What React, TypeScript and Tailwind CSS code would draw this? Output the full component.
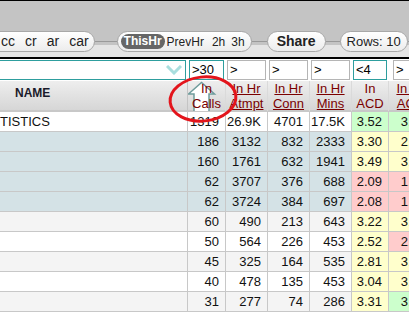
import React from 'react'

type Tone = 'g' | 'y' | 'r'

type Row = {
  name: string
  calls: string
  atmpt: string
  conn: string
  mins: string
  acd: string
  acdTone: Tone
  last: string
  lastTone: Tone
  bg: 'white' | 'blue' | 'gray'
}

const ROWS: Row[] = [
  { name: 'TISTICS', calls: '1319', atmpt: '26.9K', conn: '4701', mins: '17.5K', acd: '3.52', acdTone: 'g', last: '3.74', lastTone: 'g', bg: 'white' },
  { name: '', calls: '186', atmpt: '3132', conn: '832', mins: '2333', acd: '3.30', acdTone: 'y', last: '2.80', lastTone: 'y', bg: 'blue' },
  { name: '', calls: '160', atmpt: '1761', conn: '632', mins: '1941', acd: '3.49', acdTone: 'y', last: '3.07', lastTone: 'y', bg: 'blue' },
  { name: '', calls: '62', atmpt: '3707', conn: '376', mins: '688', acd: '2.09', acdTone: 'r', last: '1.83', lastTone: 'r', bg: 'blue' },
  { name: '', calls: '62', atmpt: '3724', conn: '384', mins: '697', acd: '2.08', acdTone: 'r', last: '1.81', lastTone: 'r', bg: 'blue' },
  { name: '', calls: '60', atmpt: '490', conn: '213', mins: '643', acd: '3.22', acdTone: 'y', last: '3.02', lastTone: 'y', bg: 'gray' },
  { name: '', calls: '50', atmpt: '564', conn: '226', mins: '453', acd: '2.52', acdTone: 'y', last: '2.00', lastTone: 'r', bg: 'white' },
  { name: '', calls: '45', atmpt: '325', conn: '164', mins: '535', acd: '2.81', acdTone: 'y', last: '3.26', lastTone: 'y', bg: 'gray' },
  { name: '', calls: '40', atmpt: '478', conn: '135', mins: '453', acd: '3.04', acdTone: 'y', last: '3.36', lastTone: 'y', bg: 'white' },
  { name: '', calls: '31', atmpt: '277', conn: '74', mins: '286', acd: '3.31', acdTone: 'y', last: '3.86', lastTone: 'g', bg: 'gray' },
]

const ROW_BG = { white: 'bg-white', blue: 'bg-[#d4e2e6]', gray: 'bg-[#f4f4f4]' }
const TONE_BG = { g: 'bg-[#ccffcc]', y: 'bg-[#ffffcc]', r: 'bg-[#ffcccc]' }

const COLS = 'grid grid-cols-[188px_38px_42px_42px_42px_37px_44px]'

function Pill({ children, className = '' }: { children: React.ReactNode; className?: string }) {
  return (
    <div className={`h-[21px] flex items-center rounded-full border border-[#a8a8a8] bg-[linear-gradient(to_bottom,#ffffff,#ececec)] text-[#222] shrink-0 whitespace-nowrap ${className}`}>
      {children}
    </div>
  )
}

const Link = ({ w }: { w: string }) => <div className={`${w} h-px bg-[#9a9a9a] shrink-0`} />

function HeadCell({ top, bottom, underline = true }: { top: string; bottom: string; underline?: boolean }) {
  return (
    <div className="border-r border-[#dadada] flex flex-col items-center justify-center leading-[15px] text-[13px] text-[#7a0000] whitespace-nowrap">
      <span className={underline ? 'underline' : ''}>{top}</span>
      <span className={underline ? 'underline' : ''}>{bottom}</span>
    </div>
  )
}

function FilterBox({ value, active = false }: { value: string; active?: boolean }) {
  return (
    <div className="px-[1px] pr-[2px]">
      <div className={`h-[20px] bg-white border ${active ? 'border-[#2e9e9e]' : 'border-[#b5b5b5]'} pl-[2px] text-[13px] leading-[18px] text-black`}>
        {value}
      </div>
    </div>
  )
}

export default function App() {
  return (
    <div className="w-[409px] h-[321px] overflow-hidden bg-white relative font-['Liberation_Sans',Arial,sans-serif]">
      {/* toolbar */}
      <div className="h-[59px] border-t border-b-2 border-black bg-[linear-gradient(to_bottom,#c4c4c4_44px,#e5e5e5_44px)] flex items-end pb-[5px]">
        <div className="flex items-center shrink-0">
          <Pill className="-ml-[14px] pl-[14px] pr-[5px] gap-[10px] text-[14px]">
            <span>cc</span><span>cr</span><span>ar</span><span>car</span>
          </Pill>
          <Link w="w-[22px]" />
          <Pill className="pl-[3px] pr-[6px] text-[12px]">
            <span className="inline-block shrink-0 bg-[#666] text-white font-bold rounded-[8px] px-[3px] leading-[15px]">ThisHr</span>
            <span className="shrink-0 ml-[2px]">PrevHr</span>
            <span className="shrink-0 ml-[8px]">2h</span>
            <span className="shrink-0 ml-[6px]">3h</span>
          </Pill>
          <Link w="w-[15px]" />
          <Pill className="px-[9px] text-[14px] font-bold">Share</Pill>
          <Link w="w-[14px]" />
          <Pill className="px-[6px] text-[13px]">Rows: 10</Pill>
          <Link w="w-[10px]" />
        </div>
      </div>

      {/* filter row */}
      <div className={`${COLS} py-[1px] bg-white`}>
        <div className="pr-[2px]">
          <div className="h-[20px] bg-white border border-[#2e9e9e] border-l-0 flex items-center justify-end pr-[3px]">
            <svg width="16" height="10" viewBox="0 0 16 10">
              <path d="M1 1 L8 8 L15 1" fill="none" stroke="#a9dede" strokeWidth="3" />
            </svg>
          </div>
        </div>
        <FilterBox value=">30" active />
        <FilterBox value=">" />
        <FilterBox value=">" />
        <FilterBox value=">" />
        <FilterBox value="<4" active />
        <div className="pl-[3px]"><FilterBox value=">" /></div>
      </div>

      {/* header row */}
      <div className={`${COLS} h-[31px] bg-[linear-gradient(to_bottom,#eeeeee,#d6d6d6)] border-b-2 border-[#c8c8c8]`}>
        <div className="border-r border-[#c4c4c4] pl-[15px] pt-[3px] text-[12px] font-bold text-[#1a1a2a]">NAME</div>
        <div className="relative border-r border-[#dadada] flex flex-col items-center justify-center leading-[15px] text-[13px] text-[#7a0000]">
          <svg className="absolute left-0 top-0" width="37" height="30" viewBox="0 0 37 30">
            <path d="M6 30 L6 13 L0.5 13 L13.5 1.5 L26.5 13 L21 13 L21 30" fill="#ffffff" stroke="#6f9c9c" strokeWidth="1.5" />
          </svg>
          <span className="relative">In</span>
          <span className="relative">Calls</span>
        </div>
        <HeadCell top="In Hr" bottom="Atmpt" />
        <HeadCell top="In Hr" bottom="Conn" />
        <HeadCell top="In Hr" bottom="Mins" />
        <HeadCell top="In" bottom="ACD" underline={false} />
        <HeadCell top="In Hr" bottom="ACD" />
      </div>

      {/* data rows */}
      {ROWS.map((r, i) => (
        <div key={i} className={`${COLS} h-[20px] text-[13px] text-[#111] leading-[19px] whitespace-nowrap`}>
          <div className={`${ROW_BG[r.bg]} border-r border-b border-[#c8c8c8]`}>{r.name}</div>
          {[r.calls, r.atmpt, r.conn, r.mins].map((v, j) => (
            <div key={j} className={`${ROW_BG[r.bg]} border-r border-b border-[#c8c8c8] text-right pr-[6px]`}>{v}</div>
          ))}
          <div className={`${TONE_BG[r.acdTone]} border-r border-b border-[#c8c8c8] text-right pr-[6px]`}>{r.acd}</div>
          <div className={`${TONE_BG[r.lastTone]} border-r border-b border-[#c8c8c8] text-right pr-[6px]`}>{r.last}</div>
        </div>
      ))}

      {/* annotation */}
      <svg className="absolute left-0 top-0 pointer-events-none" width="409" height="321">
        <ellipse cx="203" cy="99" rx="33" ry="22" fill="none" stroke="#e3151c" strokeWidth="3" transform="rotate(-6 203 99)" />
      </svg>
    </div>
  )
}
